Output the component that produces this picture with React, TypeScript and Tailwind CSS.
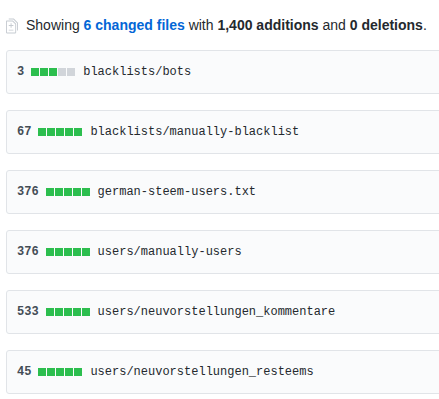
import React from 'react';

const files = [
  { count: 3, adds: 3, name: 'blacklists/bots' },
  { count: 67, adds: 5, name: 'blacklists/manually-blacklist' },
  { count: 376, adds: 5, name: 'german-steem-users.txt' },
  { count: 376, adds: 5, name: 'users/manually-users' },
  { count: 533, adds: 5, name: 'users/neuvorstellungen_kommentare' },
  { count: 45, adds: 5, name: 'users/neuvorstellungen_resteems' },
];

function DiffIcon() {
  return (
    <svg width="12" height="16" viewBox="0 0 13 16" className="shrink-0 fill-[#c6cbd1]">
      <path d="M6 7h2v1H6v2H5V8H3V7h2V5h1v2zm-3 6h5v-1H3v1zM7.5 2L11 5.5V15c0 .55-.45 1-1 1H1c-.55 0-1-.45-1-1V3c0-.55.45-1 1-1h6.5zM10 6L7 3H1v12h9V6zM8.5 0H3v1h5l4 4v8h1V4.5L8.5 0z" />
    </svg>
  );
}

function DiffStat({ adds }: { adds: number }) {
  return (
    <span className="inline-flex gap-[1px] align-middle">
      {[0, 1, 2, 3, 4].map((i) => (
        <span key={i} className={`w-[8px] h-[8px] ${i < adds ? 'bg-[#2cbe4e]' : 'bg-[#d1d5da]'}`} />
      ))}
    </span>
  );
}

export default function App() {
  return (
    <div className="w-[439px] h-[399px] overflow-hidden bg-white font-['Liberation_Sans',Arial,sans-serif] text-[#24292e]">
      {/* Summary */}
      <div className="flex items-center gap-[8px] pl-[6px] pt-[11px] h-[40px] text-[14px]">
        <DiffIcon />
        <span>
          Showing <b className="text-[#0366d6]">6 changed files</b> with <b>1,400 additions</b> and <b>0 deletions</b>.
        </span>
      </div>

      {/* File headers */}
      <div className="flex flex-col gap-[16px] pl-[6px] pt-[10px]">
        {files.map((f, idx) => (
          <div
            key={idx}
            className="w-[460px] h-[44px] flex items-center pl-[10px] pb-[1px] bg-[#fafbfc] border border-[#e1e4e8] rounded-[3px] font-['Liberation_Mono',monospace] text-[12px]"
          >
            <span className="font-bold text-[#444d56]">{f.count}</span>
            <span className="w-[7px]" />
            <DiffStat adds={f.adds} />
            <span className="w-[8px]" />
            <span>{f.name}</span>
          </div>
        ))}
      </div>
    </div>
  );
}
